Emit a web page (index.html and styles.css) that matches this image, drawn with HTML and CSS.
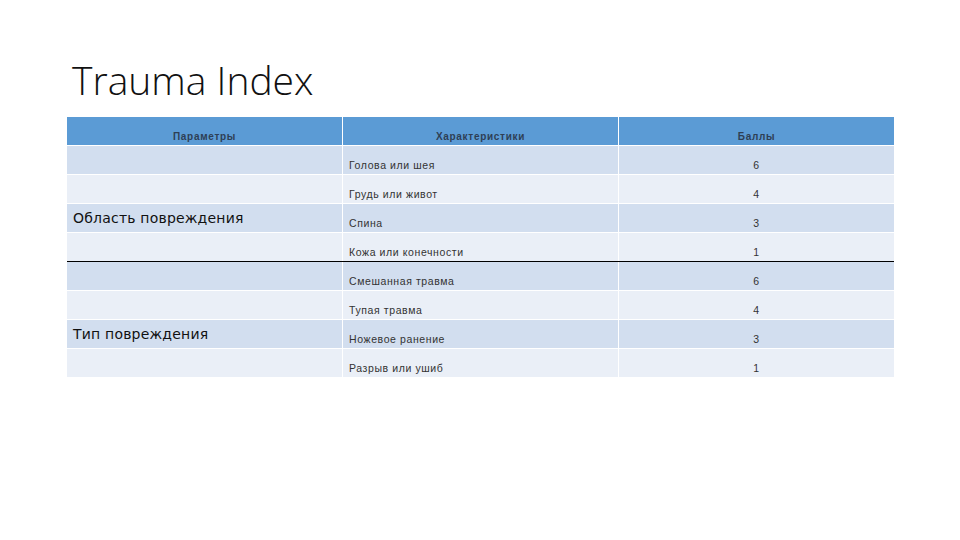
FILE: index.html
```html
<!DOCTYPE html>
<html>
<head>
<meta charset="utf-8">
<link rel="stylesheet" href="styles.css">
</head>
<body>
<div class="slide">
  <h1 class="title">Trauma Index</h1>
  <div class="table">
    <div class="row head">
      <div class="cell">Параметры</div>
      <div class="cell">Характеристики</div>
      <div class="cell">Баллы</div>
    </div>
    <div class="row dark"><div class="cell label"></div><div class="cell txt">Голова или шея</div><div class="cell num">6</div></div>
    <div class="row light"><div class="cell label"></div><div class="cell txt">Грудь или живот</div><div class="cell num">4</div></div>
    <div class="row dark"><div class="cell label">Область повреждения</div><div class="cell txt">Спина</div><div class="cell num">3</div></div>
    <div class="row light sep"><div class="cell label"></div><div class="cell txt">Кожа или конечности</div><div class="cell num">1</div></div>
    <div class="row dark"><div class="cell label"></div><div class="cell txt">Смешанная травма</div><div class="cell num">6</div></div>
    <div class="row light"><div class="cell label"></div><div class="cell txt">Тупая травма</div><div class="cell num">4</div></div>
    <div class="row dark"><div class="cell label">Тип повреждения</div><div class="cell txt">Ножевое ранение</div><div class="cell num">3</div></div>
    <div class="row light"><div class="cell label"></div><div class="cell txt">Разрыв или ушиб</div><div class="cell num">1</div></div>
  </div>
</div>
</body>
</html>
```

FILE: styles.css
```css
html, body {
  margin: 0;
  padding: 0;
  background: #ffffff;
}
.slide {
  width: 960px;
  height: 540px;
  padding: 55px 0 0 67px;
  box-sizing: border-box;
}
.title {
  margin: 0 0 0 5px;
  font-family: "Open Sans", "Liberation Sans", sans-serif;
  font-weight: 300;
  font-size: 39px;
  line-height: 50px;
  color: #111111;
}
.table {
  margin-top: 12px;
  width: 827px;
  display: flex;
  flex-direction: column;
  gap: 1px;
}
.row {
  display: grid;
  grid-template-columns: 275px 275px 275px;
  column-gap: 1px;
  height: 28px;
}
.row.sep {
  border-bottom: 1px solid #000000;
  margin-bottom: -1px;
}
.cell {
  font-family: "Liberation Sans", Arial, sans-serif;
  font-size: 10.5px;
  letter-spacing: 0.6px;
  color: #333333;
  display: flex;
  align-items: center;
  padding-top: 10px;
  box-sizing: border-box;
}
.head .cell {
  background: #5b9bd5;
  justify-content: center;
  font-weight: bold;
  font-size: 10px;
  letter-spacing: 0.7px;
  color: #2e3f55;
  padding-top: 10px;
}
.dark .cell { background: #d2deef; }
.light .cell { background: #eaeff7; }
.txt { padding-left: 6px; }
.num { justify-content: center; }
.label {
  font-family: "DejaVu Sans", sans-serif;
  font-size: 14px;
  letter-spacing: 0.2px;
  color: #111111;
  padding-left: 6px;
  padding-top: 0;
}
```
